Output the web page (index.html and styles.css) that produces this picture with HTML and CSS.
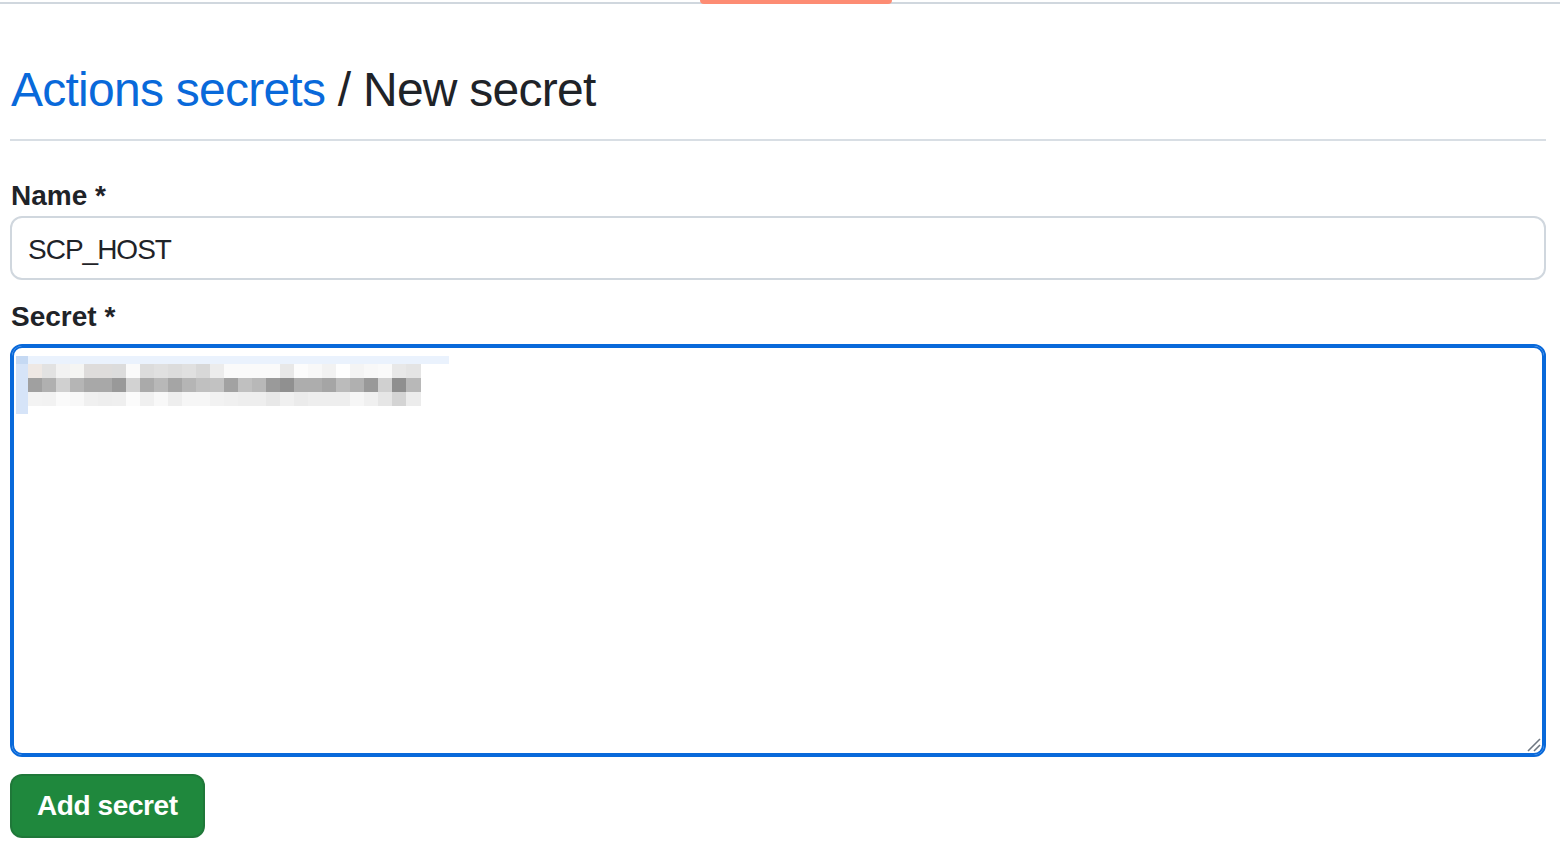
FILE: index.html
```html
<!DOCTYPE html>
<html lang="en">
<head>
<meta charset="utf-8">
<title>New secret</title>
<link rel="stylesheet" href="styles.css">
</head>
<body>
<div class="topnav">
  <div class="topnav-selected"></div>
</div>
<main class="page">
  <div class="subhead">
    <h1 class="subhead-heading"><a class="crumb" href="#">Actions secrets</a> / New secret</h1>
  </div>
  <form class="form">
    <div class="form-group">
      <label class="label">Name *</label>
      <div class="input">SCP_HOST</div>
    </div>
    <div class="form-group form-group-secret">
      <label class="label">Secret *</label>
      <div class="textarea">
        <div class="blur">
          <div class="blur-top"></div>
          <div class="blur-body">
            <div class="blur-caret"></div>
            <div class="blur-rows">
              <div class="blur-row row1"></div>
              <div class="blur-row row2"></div>
              <div class="blur-row row3"></div>
            </div>
          </div>
        </div>
        <svg class="resize" width="16" height="16" viewBox="0 0 16 16">
          <line x1="2" y1="14" x2="14" y2="2" stroke="#6e7781" stroke-width="1.6"/>
          <line x1="8" y1="14" x2="14" y2="8" stroke="#6e7781" stroke-width="1.6"/>
        </svg>
      </div>
    </div>
    <button class="btn-primary" type="button">Add secret</button>
  </form>
</main>
</body>
</html>
```

FILE: styles.css
```css
* { box-sizing: border-box; }

html, body {
  margin: 0;
  padding: 0;
  background: #ffffff;
  color: #1f2328;
  font-family: "Liberation Sans", Arial, sans-serif;
}

.topnav {
  height: 4px;
  display: flex;
  justify-content: flex-start;
  border-bottom: 2px solid #d0d7de;
  padding-left: 700px;
}

.topnav-selected {
  width: 192px;
  height: 4px;
  background: #fd8c73;
  border-radius: 0 0 4px 4px;
}

.page {
  padding: 0 14px 0 10px;
}

.subhead {
  margin-top: 56px;
  border-bottom: 2px solid #d8dee4;
  padding-bottom: 19px;
}

.subhead-heading {
  margin: 0;
  font-size: 48px;
  line-height: 60px;
  font-weight: 400;
  letter-spacing: -0.75px;
  padding-left: 1px;
  color: #1f2328;
}

.crumb {
  color: #0969da;
  text-decoration: none;
}

.form {
  display: flex;
  flex-direction: column;
  align-items: flex-start;
}

.form-group {
  width: 100%;
  display: flex;
  flex-direction: column;
}

.form-group:first-child {
  margin-top: 35px;
}

.form-group-secret {
  margin-top: 17px;
}

.label {
  display: block;
  font-size: 28px;
  line-height: 40px;
  font-weight: 700;
  padding-left: 1px;
  margin-bottom: 0;
}

.form-group-secret .label {
  margin-bottom: 7px;
}

.input {
  height: 64px;
  border: 2px solid #d0d7de;
  border-radius: 12px;
  padding: 3px 16px 0;
  display: flex;
  align-items: center;
  font-size: 28px;
  letter-spacing: -1px;
  color: #1f2328;
  background: #ffffff;
}

.textarea {
  position: relative;
  height: 413px;
  border: 2px solid #0969da;
  box-shadow: inset 0 0 0 2px #0969da;
  border-radius: 12px;
  padding: 10px 4px;
  background: #ffffff;
}

.blur {
  width: 433px;
  display: flex;
  flex-direction: column;
}

.blur-top {
  height: 8px;
  background: linear-gradient(to right, #c5d9f3 0 12px, #eaf2fd 12px 100%);
}

.blur-body {
  display: flex;
  height: 50px;
}

.blur-caret {
  width: 12px;
  height: 50px;
  background: #d6e4f8;
}

.blur-rows {
  flex: 1;
  display: flex;
  flex-direction: column;
}

.blur-row {
  height: 14px;
  width: 393px;
}

.row1 {
  background: linear-gradient(to right,
    #eee8e4 0 14px, #e2e2e2 14px 28px, #f2f2f2 28px 42px, #f5f5f3 42px 56px,
    #dedcdb 56px 70px, #dedcdb 70px 84px, #dcdcdc 84px 98px, #fafafa 98px 112px,
    #dcdcdc 112px 126px, #e0e0e0 126px 140px, #dcdcdc 140px 154px, #e0e0e0 154px 168px,
    #d8d8d8 168px 182px, #ececec 182px 196px, #fafafa 196px 210px, #fafafa 210px 224px,
    #fafafa 224px 238px, #fafafa 238px 252px, #e8e8e8 252px 266px, #fcfcfc 266px 280px,
    #f8f8f8 280px 294px, #f2f2f2 294px 308px, #fefefe 308px 322px, #f4f4f4 322px 336px,
    #f8f8f8 336px 350px, #fafafa 350px 364px, #e8e8e8 364px 378px, #e4e4e4 378px 392px);
}

.row2 {
  background: linear-gradient(to right,
    #a0a0a0 0 14px, #b0b0b0 14px 28px, #d0d0d0 28px 42px, #b5b5b5 42px 56px,
    #a8a8a8 56px 70px, #a8a8a8 70px 84px, #999999 84px 98px, #d2d2d2 98px 112px,
    #aaaaaa 112px 126px, #b8b8b8 126px 140px, #a5a5a5 140px 154px, #b5b5b5 154px 168px,
    #c0c0c0 168px 182px, #c2c2c2 182px 196px, #a2a2a2 196px 210px, #c0c0c0 210px 224px,
    #b8b8b8 224px 238px, #9a9a9a 238px 252px, #909090 252px 266px, #adadad 266px 280px,
    #adadad 280px 294px, #a5a5a5 294px 308px, #bbbbbb 308px 322px, #b0b0b0 322px 336px,
    #999999 336px 350px, #d0d0d0 350px 364px, #8f8f8f 364px 378px, #b8b8b8 378px 392px);
}

.row3 {
  background: linear-gradient(to right,
    #f3f3f3 0 14px, #f2f2f2 14px 28px, #fafafa 28px 42px, #f8f8f8 42px 56px,
    #f0f0f0 56px 70px, #eeeeee 70px 84px, #efefef 84px 98px, #fbfbfb 98px 112px,
    #f0f0f0 112px 126px, #f8f8f8 126px 140px, #eeeeee 140px 154px, #f6f6f6 154px 168px,
    #f6f6f6 168px 182px, #f2f2f2 182px 196px, #f0f0f0 196px 210px, #eeeeee 210px 224px,
    #eeeeee 224px 238px, #e8e8e8 238px 252px, #f0f0f0 252px 266px, #ebebeb 266px 280px,
    #eeeeee 280px 294px, #eeeeee 294px 308px, #eeeeee 308px 322px, #f6f6f6 322px 336px,
    #f0f0f0 336px 350px, #e6e6e6 350px 364px, #d4d4d4 364px 378px, #ececec 378px 392px);
}

.resize {
  position: absolute;
  right: 2px;
  bottom: 2px;
}

.btn-primary {
  margin-top: 17px;
  height: 64px;
  padding: 0 25px;
  background: #1f883d;
  color: #ffffff;
  border: 2px solid rgba(31, 35, 40, 0.15);
  border-radius: 12px;
  font-family: "Liberation Sans", Arial, sans-serif;
  font-size: 28px;
  font-weight: 700;
  letter-spacing: -0.4px;
  cursor: pointer;
}
```
